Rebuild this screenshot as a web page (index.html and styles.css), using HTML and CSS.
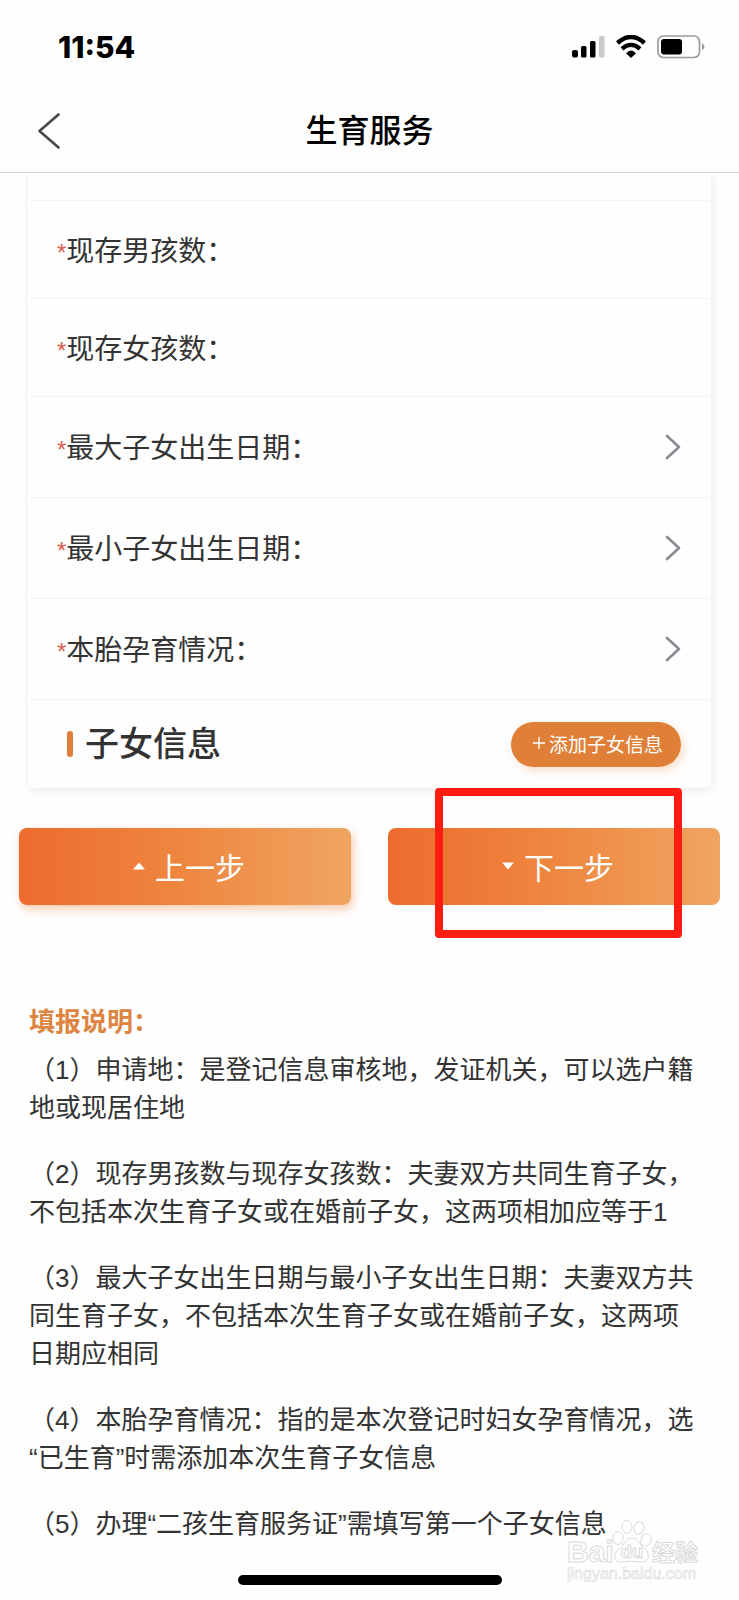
FILE: index.html
```html
<!DOCTYPE html>
<html lang="zh-CN">
<head>
<meta charset="utf-8">
<meta name="viewport" content="width=device-width, initial-scale=1">
<title>生育服务</title>
<link rel="stylesheet" href="styles.css">
</head>
<body>
<div class="status-bar">
  <time class="clock">11:54</time>
  <div class="status-icons">
    <svg width="33" height="24" viewBox="0 0 33 24" aria-hidden="true">
      <rect x="0" y="15" width="6" height="7.500" rx="2"/>
      <rect x="9" y="11" width="5.500" height="11.500" rx="1.500"/>
      <rect x="18" y="6" width="5.500" height="16.500" rx="1.500"/>
      <rect x="27" y="1" width="5.500" height="21.500" rx="1.500" fill="#c9c9c9"/>
    </svg>
    <svg width="30" height="24" viewBox="0 0 30 24" aria-hidden="true">
      <path d="M1.500 8Q15-4 28.500 8" fill="none" stroke="#000" stroke-width="4.400"/>
      <path d="M6 13.800Q15 6 24 13.800" fill="none" stroke="#000" stroke-width="4.200"/>
      <path d="M10 18.200Q15 13 20 18.200L15 23Z"/>
    </svg>
    <svg width="48" height="24" viewBox="0 0 48 24" aria-hidden="true">
      <rect x="1" y="1" width="41.500" height="21.500" rx="5.500" fill="none" stroke="#9b9b9b" stroke-width="1.700"/>
      <rect x="4" y="4" width="21" height="15.500" rx="3"/>
      <path d="M45 8.500Q47.500 9.500 47.500 11.800T45 15Z" fill="#9b9b9b"/>
    </svg>
  </div>
</div>
<header class="nav">
  <button class="back" type="button" aria-label="返回">
    <svg width="22" height="36" viewBox="0 0 22 36" aria-hidden="true"><path d="M20.500 1.500L1.500 18L20.500 34.500" fill="none" stroke="#48484c" stroke-width="2.600" stroke-linecap="round" stroke-linejoin="round"/></svg>
  </button>
  <h1 class="nav-title">生育服务</h1>
</header>
<main class="page">
  <form class="form">
    <section class="card">
      <div class="row row-input">
        <label class="label" for="boys"><span class="required">*</span>现存男孩数：</label>
        <input class="field" id="boys" type="text" inputmode="numeric">
      </div>
      <div class="row row-input">
        <label class="label" for="girls"><span class="required">*</span>现存女孩数：</label>
        <input class="field" id="girls" type="text" inputmode="numeric">
      </div>
      <button class="row row-picker" type="button">
        <span class="label"><span class="required">*</span>最大子女出生日期：</span>
        <svg class="chevron" width="16" height="26" viewBox="0 0 16 26" aria-hidden="true"><path d="M2 2L14 13L2 24"/></svg>
      </button>
      <button class="row row-picker" type="button">
        <span class="label"><span class="required">*</span>最小子女出生日期：</span>
        <svg class="chevron" width="16" height="26" viewBox="0 0 16 26" aria-hidden="true"><path d="M2 2L14 13L2 24"/></svg>
      </button>
      <button class="row row-picker" type="button">
        <span class="label"><span class="required">*</span>本胎孕育情况：</span>
        <svg class="chevron" width="16" height="26" viewBox="0 0 16 26" aria-hidden="true"><path d="M2 2L14 13L2 24"/></svg>
      </button>
      <div class="row children">
        <h2 class="children-title">子女信息</h2>
        <button class="add" type="button"><svg width="12" height="12" viewBox="0 0 12 12" aria-hidden="true"><path d="M6 0V12M0 6H12" stroke="#fff" stroke-width="1.400"/></svg>添加子女信息</button>
      </div>
    </section>
    <div class="actions">
      <button class="step step-prev" type="button"><svg width="12" height="8" viewBox="0 0 12 8" aria-hidden="true"><path d="M0 7.500L6 0.500L12 7.500Z" fill="#fff"/></svg>上一步</button>
      <div class="next-wrap">
        <button class="step" type="button"><svg width="12" height="8" viewBox="0 0 12 8" aria-hidden="true"><path d="M0 0.500L6 7.500L12 0.500Z" fill="#fff"/></svg>下一步</button>
        <span class="highlight" aria-hidden="true"></span>
      </div>
    </div>
  </form>
  <section class="notes">
    <h2 class="notes-title">填报说明：</h2>
    <p>（1）申请地：是登记信息审核地，发证机关，可以选户籍地或现居住地</p>
    <p>（2）现存男孩数与现存女孩数：夫妻双方共同生育子女，不包括本次生育子女或在婚前子女，这两项相加应等于1</p>
    <p>（3）最大子女出生日期与最小子女出生日期：夫妻双方共同生育子女，不包括本次生育子女或在婚前子女，这两项日期应相同</p>
    <p>（4）本胎孕育情况：指的是本次登记时妇女孕育情况，选“已生育”时需添加本次生育子女信息</p>
    <p>（5）办理“二孩生育服务证”需填写第一个子女信息</p>
  </section>
</main>
<footer class="home"><span class="home-indicator"></span></footer>
<svg class="watermark" width="134" height="66" viewBox="0 0 134 66" role="img" aria-label="Baidu 经验 jingyan.baidu.com">
  <g fill="#fff" stroke="#dadada" stroke-width="1">
    <text x="0" y="42" font-size="30" font-weight="700">Bai</text>
    <ellipse cx="51" cy="18" rx="5" ry="6.500"/>
    <ellipse cx="60" cy="7" rx="5" ry="6.500"/>
    <ellipse cx="72" cy="8" rx="5" ry="6.500" transform="rotate(12 72 8)"/>
    <ellipse cx="79" cy="20" rx="5" ry="6.500" transform="rotate(25 79 20)"/>
    <path d="M65 18C58 18 57 26 52 29C45 34 47 43 55 42C61 41 68 41 73 42C82 43 84 34 78 29C73 26 72 18 65 18Z"/>
    <text x="54" y="38" font-size="18" font-weight="700">du</text>
    <text x="85" y="41" font-size="23" font-weight="700">经验</text>
    <text x="0" y="59" font-size="16" stroke-width="0.600">jingyan.baidu.com</text>
  </g>
</svg>
</body>
</html>
```

FILE: styles.css
```css
* {
  box-sizing: border-box;
}

body {
  position: relative;
  margin: 0;
  background: #fefefe;
  color: #333;
  font-family: "Liberation Sans", "Noto Sans CJK SC", sans-serif;
}

button,
input {
  margin: 0;
  padding: 0;
  border: 0;
  background: none;
  color: inherit;
  font: inherit;
}

h1,
h2,
p {
  margin: 0;
}

svg {
  flex: none;
}

.status-bar {
  display: flex;
  align-items: center;
  justify-content: space-between;
  height: 92px;
  padding: 2px 34px 0 58px;
}

.clock {
  color: #000;
  font: 800 30px/36px Inter, sans-serif;
}

.status-icons {
  display: flex;
  gap: 11px;
}

.nav {
  display: grid;
  grid-template-columns: 60px 1fr 60px;
  align-items: center;
  height: 81px;
  padding-bottom: 2px;
  border-bottom: 1px solid #d2d2d2;
}

.back {
  display: flex;
  justify-content: flex-end;
}

.nav-title {
  color: #000;
  font-size: 32px;
  font-weight: 500;
  line-height: 40px;
  text-align: center;
}

.page {
  overflow: hidden;
}

.card {
  margin: 0 28px;
  padding: 27px 2px 0;
  border-radius: 0 0 6px 6px;
  background: #fefefe;
  box-shadow: 1px 2px 10px rgba(0, 0, 0, 0.09);
}

.row {
  display: flex;
  align-items: center;
  justify-content: space-between;
  width: 100%;
  padding: 0 28px 0 27px;
  border-top: 1px solid #f3f3f3;
  text-align: left;
}

.row-input {
  height: 98px;
}

.row-picker {
  height: 101px;
}

.label {
  padding-top: 5px;
  font-size: 28px;
  line-height: 40px;
  white-space: nowrap;
}

.required {
  color: #d8604e;
  font-size: 24px;
}

.field {
  flex: 1;
  min-width: 0;
  height: 40px;
  font-size: 28px;
  outline: 0;
}

.chevron path {
  fill: none;
  stroke: #898991;
  stroke-width: 2.6px;
  stroke-linecap: round;
  stroke-linejoin: round;
}

.children {
  height: 89px;
  padding-left: 37px;
}

.children-title {
  display: flex;
  align-items: center;
  gap: 12px;
  font-size: 34px;
  font-weight: 500;
  line-height: 44px;
}

.children-title::before {
  width: 6px;
  height: 26px;
  border-radius: 3px;
  background: #e08038;
  content: "";
}

.add {
  display: flex;
  align-items: center;
  justify-content: center;
  gap: 4px;
  width: 170px;
  height: 45px;
  padding: 0 0 2px 4px;
  border-radius: 23px;
  background: #e08038;
  box-shadow: 3px 4px 8px rgba(236, 130, 60, 0.25);
  color: #fff;
  font-size: 19px;
}

.actions {
  display: grid;
  grid-template-columns: 1fr 1fr;
  gap: 37px;
  padding: 40px 19px 0;
}

.next-wrap {
  position: relative;
}

.step {
  display: flex;
  align-items: center;
  justify-content: center;
  gap: 10px;
  width: 100%;
  height: 77px;
  padding: 0 0 2px 8px;
  border-radius: 8px;
  background: linear-gradient(90deg, #ed6c2d, #ee8740 50%, #f0a562);
  color: #fff;
  font-size: 30px;
}

.step-prev {
  box-shadow: 2px 4px 10px rgba(238, 120, 50, 0.4);
}

.highlight {
  position: absolute;
  inset: -40px 38px -33px 47px;
  border: 8px solid #fc1c12;
  border-radius: 4px;
  pointer-events: none;
}

.notes {
  padding: 98px 38px 0 29px;
  font-size: 26px;
  line-height: 38px;
}

.notes-title {
  margin-bottom: 10px;
  color: #dd8440;
  font-size: 26px;
  font-weight: 700;
}

.notes p + p {
  margin-top: 28px;
}

.home {
  display: flex;
  justify-content: center;
  padding: 32px 0 15px;
}

.home-indicator {
  width: 264px;
  height: 10px;
  border-radius: 5px;
  background: #000;
}

.watermark {
  position: absolute;
  right: 38px;
  bottom: 14px;
  font-family: "Liberation Sans", "Noto Sans CJK SC", sans-serif;
}
```
